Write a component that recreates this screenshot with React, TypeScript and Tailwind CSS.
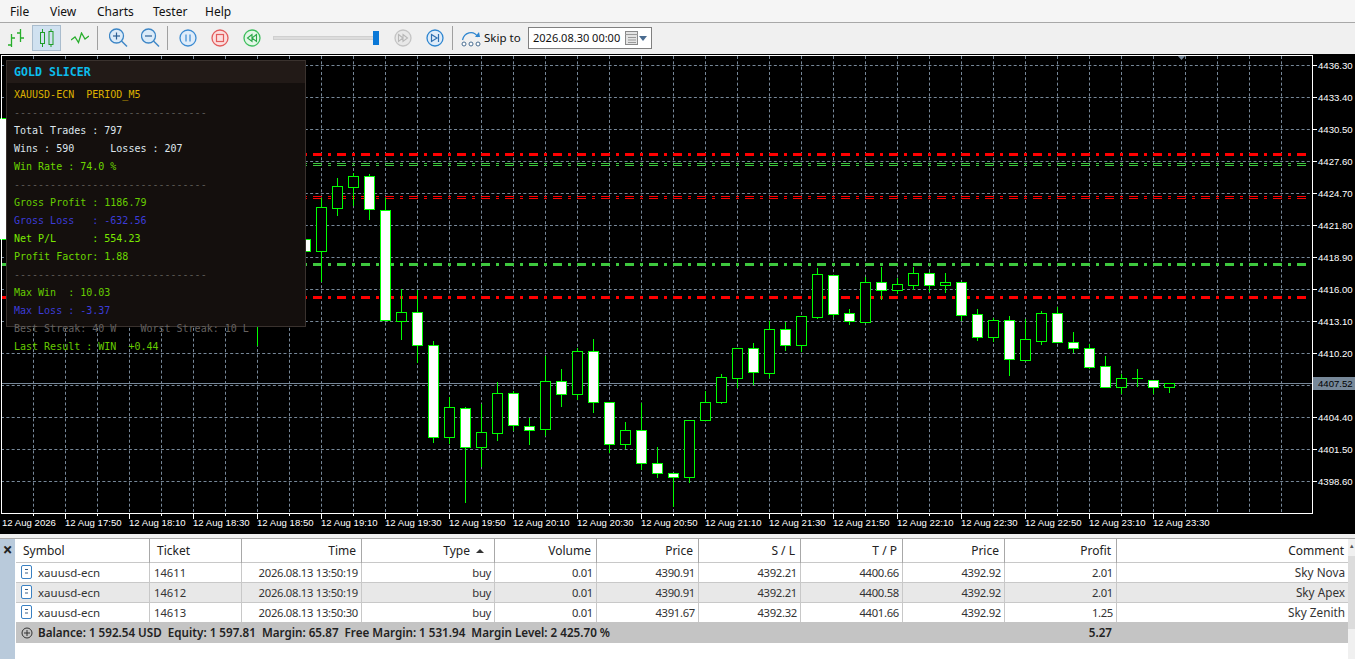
import React from 'react'

const SANS = "font-['Noto_Sans',sans-serif]"

// [center x, body top, body bottom, wick top, wick bottom, white body?]
const candles: [number, number, number, number, number, boolean][] = [
  [1, 118, 239, 118, 239, true], [257, 300, 320, 300, 346, false],
  [305, 239, 251, 235, 255, true], [321, 207, 251, 198, 282, false], [337, 186, 208, 178, 216, false],
  [353, 176, 187, 173, 206, false], [369, 176, 209, 174, 220, true], [385, 210, 320, 198, 320, true],
  [401, 312, 321, 289, 340, false], [417, 312, 345, 290, 363, true], [433, 345, 437, 341, 443, true],
  [449, 407, 437, 397, 444, false], [465, 408, 447, 407, 503, true], [481, 432, 447, 404, 467, false],
  [497, 393, 433, 382, 441, false], [513, 393, 425, 391, 431, true], [529, 426, 430, 418, 445, true],
  [545, 381, 429, 356, 436, false], [561, 381, 394, 369, 407, true], [577, 351, 394, 348, 400, false],
  [593, 351, 402, 339, 413, true], [609, 402, 444, 402, 453, true], [625, 430, 444, 422, 449, false],
  [641, 430, 463, 403, 470, true], [657, 463, 473, 447, 478, true], [673, 473, 477, 473, 507, true],
  [689, 420, 477, 420, 483, false], [705, 402, 420, 391, 421, false], [721, 377, 402, 374, 404, false],
  [737, 348, 378, 348, 388, false], [753, 348, 372, 343, 385, true], [769, 329, 373, 321, 378, false],
  [785, 329, 345, 322, 351, true], [801, 316, 345, 316, 352, false], [817, 274, 317, 268, 319, false],
  [833, 275, 314, 275, 317, true], [849, 313, 321, 309, 325, true], [865, 282, 322, 277, 323, false],
  [881, 282, 290, 267, 300, true], [897, 284, 290, 278, 294, false], [913, 273, 285, 267, 290, false],
  [929, 273, 285, 272, 292, true], [945, 282, 285, 273, 293, false], [961, 282, 315, 282, 321, true],
  [977, 314, 337, 309, 341, true], [993, 320, 337, 318, 342, false], [1009, 320, 359, 316, 376, true],
  [1025, 339, 360, 319, 360, false], [1041, 313, 341, 311, 345, false], [1057, 313, 342, 307, 342, true],
  [1073, 342, 348, 332, 353, true], [1089, 348, 367, 344, 369, true], [1105, 366, 387, 356, 387, true],
  [1121, 378, 387, 374, 394, false], [1137, 378, 378, 369, 387, false], [1153, 380, 387, 380, 394, true],
  [1169, 383, 387, 383, 393, false],
]

const prices = ['4436.30', '4433.40', '4430.50', '4427.60', '4424.70', '4421.80', '4418.90', '4416.00', '4413.10', '4410.20', '', '4404.40', '4401.50', '4398.60']
const times = ['17:50', '18:10', '18:30', '18:50', '19:10', '19:30', '19:50', '20:10', '20:30', '20:50', '21:10', '21:30', '21:50', '22:10', '22:30', '22:50', '23:10', '23:30']

const hLines = Array.from({ length: 14 }, (_, i) => 65 + i * 32)
const vLines = Array.from({ length: 40 }, (_, i) => 33 + i * 32)

const dashes = '-'.repeat(32)
const panelRows: [string, string][] = [
  ['XAUUSD-ECN  PERIOD_M5', 'text-[#dcb000]'],
  [dashes, 'text-[#5c5855]'],
  ['Total Trades : 797', 'text-[#dfe6ec]'],
  ['Wins : 590      Losses : 207', 'text-[#dfe6ec]'],
  ['Win Rate : 74.0 %', 'text-[#6cd800]'],
  [dashes, 'text-[#5c5855]'],
  ['Gross Profit : 1186.79', 'text-[#66cc00]'],
  ['Gross Loss   : -632.56', 'text-[#3c3cd8]'],
  ['Net P/L      : 554.23', 'text-[#7ae800]'],
  ['Profit Factor: 1.88', 'text-[#6cd800]'],
  [dashes, 'text-[#5c5855]'],
  ['Max Win  : 10.03', 'text-[#66cc00]'],
  ['Max Loss : -3.37', 'text-[#3c3cd8]'],
  ['Best Streak: 40 W    Worst Streak: 10 L', 'text-[#666260]'],
  ['Last Result : WIN  +0.44', 'text-[#66cc00]'],
]

const columns = [
  { label: 'Symbol', cls: 'text-left pl-[7px]' },
  { label: 'Ticket', cls: 'text-left pl-[7px]' },
  { label: 'Time', cls: 'text-right pr-[5px]' },
  { label: 'Type', cls: 'text-right pr-[24px]' },
  { label: 'Volume', cls: 'text-right pr-[5px]' },
  { label: 'Price', cls: 'text-right pr-[5px]' },
  { label: 'S / L', cls: 'text-right pr-[5px]' },
  { label: 'T / P', cls: 'text-right pr-[5px]' },
  { label: 'Price', cls: 'text-right pr-[5px]' },
  { label: 'Profit', cls: 'text-right pr-[5px]' },
  { label: 'Comment', cls: 'text-right pr-[4px]' },
]

const rows = [
  ['xauusd-ecn', '14611', '2026.08.13 13:50:19', 'buy', '0.01', '4390.91', '4392.21', '4400.66', '4392.92', '2.01', 'Sky Nova'],
  ['xauusd-ecn', '14612', '2026.08.13 13:50:19', 'buy', '0.01', '4390.91', '4392.21', '4400.58', '4392.92', '2.01', 'Sky Apex'],
  ['xauusd-ecn', '14613', '2026.08.13 13:50:30', 'buy', '0.01', '4391.67', '4392.32', '4401.66', '4392.92', '1.25', 'Sky Zenith'],
]

const gridCols = 'grid grid-cols-[134px_92px_120px_133px_102px_102px_102px_102px_102px_112px_1fr]'

const Sep = ({ ml }: { ml: string }) => <div className={`w-px h-[24px] bg-[#a0a0a0] shrink-0 ${ml}`} />

const Round = ({ stroke, fill, ml, children }: { stroke: string; fill: string; ml: string; children: React.ReactNode }) => (
  <svg width="18" height="18" viewBox="0 0 18 18" className={`shrink-0 ${ml}`}>
    <circle cx="9" cy="9" r="8" fill={fill} stroke={stroke} strokeWidth="1.3" />
    {children}
  </svg>
)

const Magnifier = ({ ml, plus }: { ml: string; plus?: boolean }) => (
  <svg width="20" height="20" viewBox="0 0 20 20" className={`shrink-0 ${ml}`}>
    <circle cx="7.5" cy="8" r="7" fill="#dcebf8" stroke="#3d86c6" strokeWidth="1.3" />
    <path d="M12.500 13l5.500 5.500" stroke="#3d86c6" strokeWidth="1.4" />
    <path d="M4 8h7" stroke="#2c5f94" strokeWidth="1.2" />
    {plus && <path d="M7.500 4.500v7" stroke="#2c5f94" strokeWidth="1.2" />}
  </svg>
)

const Toolbar = () => (
  <div className="flex items-center h-[30px] bg-[#f0f0f0]">
    <svg width="18" height="18" viewBox="0 0 18 18" className="ml-[7px] shrink-0">
      <path d="M4.500 5v13M1 16h3.500M4.500 9H8M13.500 0v13M10 4h3.500M13.500 9H17" stroke="#27ae2b" strokeWidth="1.3" fill="none" />
    </svg>
    <div className="ml-[7px] w-[29px] h-[26px] bg-[#d0e1f0] border border-[#a9bccd] flex items-center justify-center shrink-0">
      <svg width="16" height="18" viewBox="0 0 16 18">
        <path d="M3.500 0v18M12 0v18" stroke="#1f9e28" strokeWidth="1" />
        <rect x="1.500" y="3.500" width="4" height="11" fill="#d0e1f0" stroke="#1f9e28" />
        <rect x="10" y="2.500" width="4" height="13" fill="#d0e1f0" stroke="#1f9e28" />
      </svg>
    </div>
    <svg width="18" height="12" viewBox="0 0 18 12" className="ml-[10px] shrink-0">
      <path d="M0 8l4-3 3.500 5.500L10.500 1 14 7l4-3" stroke="#27ae2b" strokeWidth="1.3" fill="none" />
    </svg>
    <Sep ml="ml-[8px]" />
    <Magnifier ml="ml-[11px]" plus />
    <Magnifier ml="ml-[12px]" />
    <Sep ml="ml-[6px]" />
    <Round stroke="#3c8bd2" fill="#dfecf9" ml="ml-[11px]">
      <path d="M7 5.500v7M11 5.500v7" stroke="#3c8bd2" strokeWidth="1.2" />
    </Round>
    <Round stroke="#e35d5d" fill="#fbdfdf" ml="ml-[14px]">
      <rect x="5.500" y="5.500" width="7" height="7" fill="none" stroke="#e35d5d" strokeWidth="1.2" />
    </Round>
    <Round stroke="#3dbe5c" fill="#e3f7e7" ml="ml-[14px]">
      <path d="M9 5.500L4.500 9 9 12.500zM13.500 5.500L9 9l4.500 3.500z" fill="none" stroke="#2aa748" strokeWidth="1.1" />
    </Round>
    <div className="relative ml-[12px] w-[106px] h-[16px] shrink-0 flex items-center">
      <div className="w-full h-[4px] bg-[#dcdcdc] border border-[#cfcfcf]" />
      <div className="absolute right-0 top-[1px] w-[6px] h-[14px] bg-[#0a78d7]" />
    </div>
    <Round stroke="#c4c4c4" fill="#e8e8e8" ml="ml-[15px]">
      <path d="M4.500 5.500L9 9l-4.500 3.500zM9 5.500L13.500 9 9 12.500z" fill="none" stroke="#b8b8b8" strokeWidth="1.1" />
    </Round>
    <Round stroke="#2f86d0" fill="#dfecf9" ml="ml-[14px]">
      <path d="M5.500 5.500L11 9l-5.500 3.500zM12.500 5v8" fill="none" stroke="#2f6fb0" strokeWidth="1.2" />
    </Round>
    <Sep ml="ml-[8px]" />
    <svg width="20" height="17" viewBox="0 0 20 17" className="ml-[8px] shrink-0">
      <path d="M1.500 10C3 3 12 -1 17 7" fill="none" stroke="#2f86d0" strokeWidth="1.3" />
      <path d="M14 7h5l-1-5z" fill="#2f86d0" />
      <circle cx="3" cy="14" r="2" fill="#fff" stroke="#4a6e92" />
      <circle cx="10" cy="14" r="2" fill="#fff" stroke="#4a6e92" />
      <circle cx="17" cy="14" r="2" fill="#fff" stroke="#4a6e92" />
    </svg>
    <span className="ml-[3px] text-[11.5px] text-[#111] whitespace-nowrap w-[44px] shrink-0">Skip to</span>
    <div className="w-[124px] h-[22px] bg-white border border-[#808080] flex items-center pl-[4px] shrink-0">
      <span className="text-[11px] text-[#111] whitespace-nowrap w-[92px]">2026.08.30 00:00</span>
      <svg width="26" height="14" viewBox="0 0 26 14" className="shrink-0">
        <rect x="0.500" y="0.500" width="12" height="13" fill="#e4e4e4" stroke="#8a8a8a" />
        <path d="M0 3.500h13M3 6.500h8M3 9h8M3 11.500h8" stroke="#9a9a9a" />
        <path d="M14 5h8l-4 5z" fill="#4a6c90" />
      </svg>
    </div>
  </div>
)

const Chart = () => (
  <div className="relative h-[480px] bg-black overflow-hidden">
    <svg width="1355" height="480" viewBox="0 54 1355 480" className="block">
      <g stroke="#778899" strokeWidth="1" strokeDasharray="3 2.33">
        {hLines.map((y) => <line key={y} x1="1" x2="1312" y1={y + 0.5} y2={y + 0.5} />)}
        {vLines.map((x) => <line key={x} x1={x + 0.5} x2={x + 0.5} y1="56" y2="513" />)}
      </g>
      <g strokeDasharray="9 6 3 6" fill="none">
        <line x1="1" x2="1306" y1="154.500" y2="154.500" stroke="#ff0000" strokeWidth="3" />
        <line x1="1" x2="1306" y1="163.500" y2="163.500" stroke="#3ec83e" />
        <line x1="1" x2="1306" y1="165.500" y2="165.500" stroke="#3ec83e" />
        <line x1="1" x2="1306" y1="196.500" y2="196.500" stroke="#ff0000" />
        <line x1="1" x2="1306" y1="198.500" y2="198.500" stroke="#ff0000" />
        <line x1="1" x2="1306" y1="264.500" y2="264.500" stroke="#3ec83e" strokeWidth="3" />
        <line x1="1" x2="1306" y1="297.500" y2="297.500" stroke="#ff0000" strokeWidth="3" />
      </g>
      <line x1="2" x2="1312" y1="383.500" y2="383.500" stroke="#778899" />
      <path d="M1177 55h9l-4.500 5z" fill="#778899" />
      <g shapeRendering="crispEdges">
        {candles.map(([x, top, bottom, wickTop, wickBottom, white]) => (
          <g key={x}>
            <line x1={x + 0.5} x2={x + 0.5} y1={wickTop} y2={wickBottom} stroke="#00ff00" />
            {top === bottom
              ? <line x1={x - 5} x2={x + 6} y1={top + 0.5} y2={top + 0.5} stroke="#00ff00" />
              : <rect x={x - 4.5} y={top + 0.5} width="10" height={bottom - top} fill={white ? '#ffffff' : '#000000'} stroke="#00ff00" />}
          </g>
        ))}
      </g>
      <g stroke="#ffffff" shapeRendering="crispEdges">
        <path d="M1.500 55.500H1312.500V513.500H1.500z" fill="none" />
        {hLines.map((y) => <line key={y} x1="1313" x2="1317" y1={y + 0.5} y2={y + 0.5} />)}
        {Array.from({ length: 18 }, (_, i) => 65 + i * 64).map((x) => <line key={x} x1={x + 0.5} x2={x + 0.5} y1="514" y2="519" />)}
        {Array.from({ length: 19 }, (_, i) => 33 + i * 64).map((x) => <line key={x} x1={x + 0.5} x2={x + 0.5} y1="514" y2="516" />)}
      </g>
      <g fontFamily="'Liberation Sans', sans-serif" fontSize="9.6" fill="#ffffff">
        {prices.map((p, i) => p && <text key={p} x="1318" y={69 + i * 32}>{p}</text>)}
        <text x="2" y="526">12 Aug 2026</text>
        {times.map((t, i) => <text key={t} x={65 + i * 64} y="526">12 Aug {t}</text>)}
        <rect x="1313" y="377" width="42" height="13" fill="#778899" />
        <text x="1318" y="387" fill="#000000">4407.52</text>
        <text x="7" y="66" fill="#d8d8d8">XAUUSD-ECN,M5   4407.54  4407.58  4407.45  4407.52</text>
      </g>
    </svg>

    <div className="absolute left-[6px] top-[6px] w-[300px] h-[267px] bg-[#140f0d] border border-[#3a322e] font-['DejaVu_Sans_Mono',monospace] text-[10px]">
      <div className="h-[22px] bg-[#221a17] flex items-center pl-[7px] pt-[2px] text-[11.6px] font-bold text-[#0cbdec]">GOLD SLICER</div>
      <div className="pl-[7px] pt-[3px]">
        {panelRows.map(([text, color], i) => (
          <div key={i} className={`h-[18px] leading-[18px] whitespace-pre ${color}`}>{text}</div>
        ))}
      </div>
    </div>
  </div>
)

const Table = () => (
  <div className={`flex flex-1 border-t border-[#a8a8a8] bg-white ${SANS} text-[11.5px] text-[#333]`}>
    <div className="w-[15px] mr-px bg-[#b9cadb] shrink-0 flex justify-center pt-[2px]">
      <span className="text-[17px] leading-[18px] font-bold text-[#222]">×</span>
    </div>
    <div className="flex-1 min-w-0">
      <div className={`${gridCols} h-[23px] leading-[24px] text-[12px] text-[#222] items-stretch`}>
        {columns.map((c) => (
          <div key={c.label + c.cls + c.label.length} className={`relative border-r border-[#a8a8a8] last:border-r-0 ${c.cls}`}>
            {c.label}
            {c.label === 'Type' && <span className="absolute right-[10px] top-[10px] w-0 h-0 border-x-[4px] border-x-transparent border-b-[4px] border-b-[#333]" />}
          </div>
        ))}
      </div>
      {rows.map((row, i) => (
        <div key={row[1]} className={`${gridCols} h-[20px] leading-[19px] border-t border-[#c8c8c8] ${i === 1 ? 'bg-[#e8e8e8]' : 'bg-white'}`}>
          {row.map((cell, j) => (
            <div key={j} className={`border-r border-[#c8c8c8] whitespace-nowrap last:border-r-0 ${j === 0 ? 'flex items-center pl-[5px]' : j === 1 ? 'pl-[4px] text-[11.25px]' : j === 10 ? 'text-right pr-[3px] text-[11.75px]' : 'text-right pr-[3px] text-[11.25px] tracking-[-0.3px]'}`}>
              {j === 0 && (
                <svg width="12" height="15" viewBox="0 0 12 15" className="mr-[5px] shrink-0">
                  <rect x="0.500" y="0.500" width="10" height="13" rx="1.500" fill="#fff" stroke="#3a80c2" />
                  <path d="M4 4.500h3M4 8h3" stroke="#3a5f85" />
                </svg>
              )}
              {cell}
            </div>
          ))}
        </div>
      ))}
      <div className="relative h-[21px] leading-[21px] bg-[#c4c4c4] flex items-center pl-[5px] font-semibold text-[11.65px] text-[#222] whitespace-pre">
        <svg width="12" height="12" viewBox="0 0 12 12" className="mr-[5px] shrink-0">
          <circle cx="6" cy="6" r="5" fill="none" stroke="#333" />
          <path d="M3 6h6M6 3v6" stroke="#333" />
        </svg>
        Balance: 1 592.54 USD  Equity: 1 597.81  Margin: 65.87  Free Margin: 1 531.94  Margin Level: 2 425.70 %
        <span className="absolute left-[1050px] w-[46px] text-right">5.27</span>
      </div>
    </div>
    <div className="w-[7px] shrink-0 flex flex-col bg-[#f0f0f0]">
      <div className="h-[17px] text-[7px] leading-[14px] text-center text-[#555]">▴</div>
      <div className="h-[73px] bg-[#dcdcdc]" />
    </div>
  </div>
)

export default function App() {
  return (
    <div className={`w-[1355px] h-[659px] flex flex-col overflow-hidden bg-[#f0f0f0] ${SANS}`}>
      <div className="h-[23px] bg-[#f5f5f5] border-b border-[#a8a8a8] flex items-center pt-[2px] text-[12px] text-[#111]">
        <span className="ml-[10px] w-[40px]">File</span>
        <span className="w-[47px]">View</span>
        <span className="w-[56px]">Charts</span>
        <span className="w-[52px]">Tester</span>
        <span>Help</span>
      </div>
      <Toolbar />
      <div className="h-[1px]" />
      <Chart />
      <div className="h-[4px]" />
      <Table />
    </div>
  )
}
